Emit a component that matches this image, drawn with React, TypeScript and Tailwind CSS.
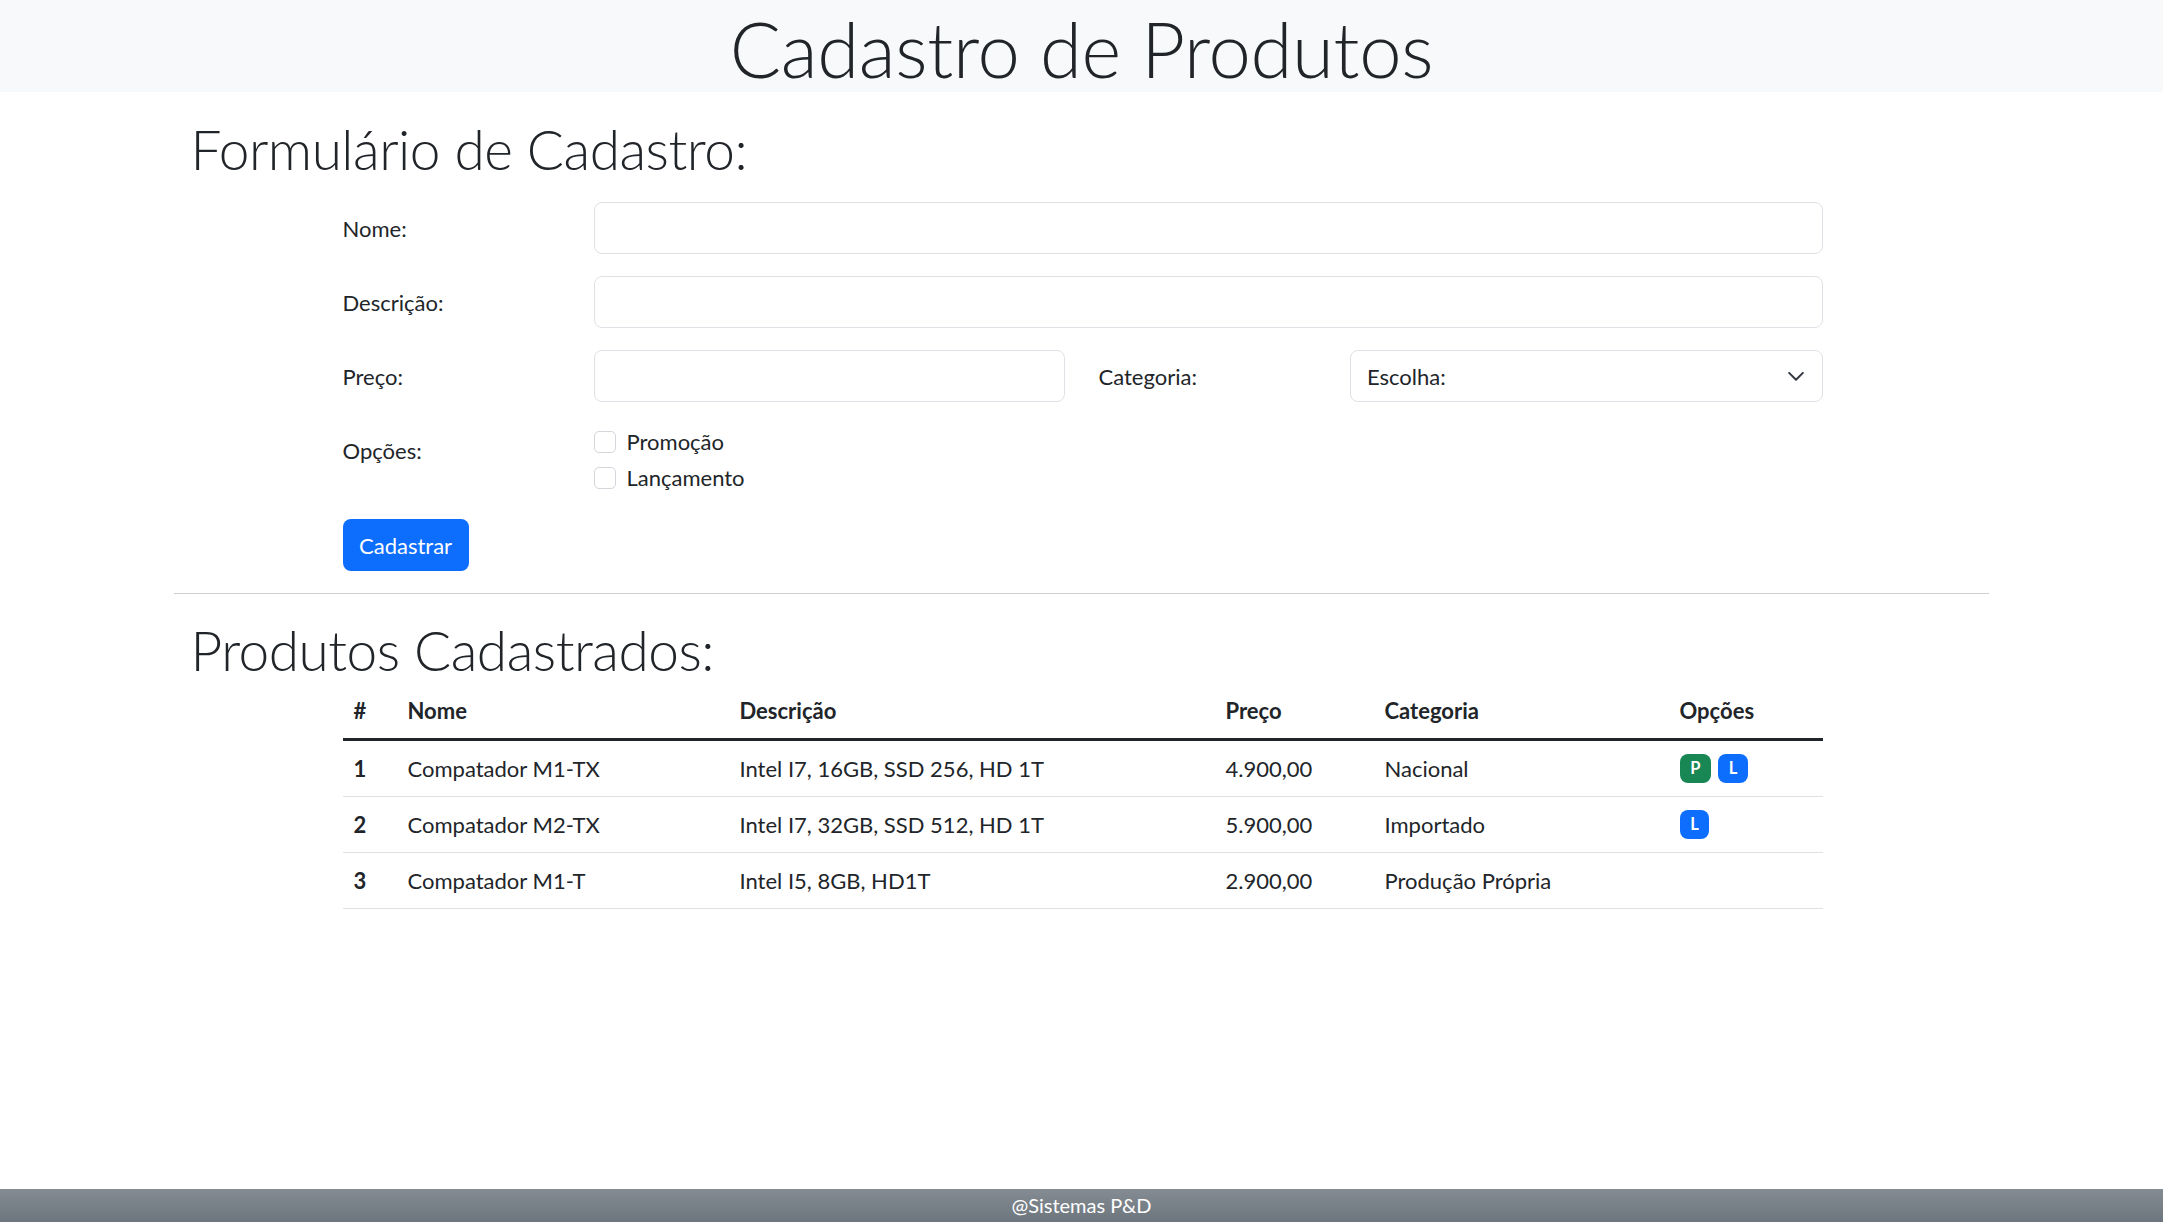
import React from 'react';

type Produto = {
  id: number;
  nome: string;
  descricao: string;
  preco: string;
  categoria: string;
  promocao: boolean;
  lancamento: boolean;
};

const produtos: Produto[] = [
  { id: 1, nome: 'Compatador M1-TX', descricao: 'Intel I7, 16GB, SSD 256, HD 1T', preco: '4.900,00', categoria: 'Nacional', promocao: true, lancamento: true },
  { id: 2, nome: 'Compatador M2-TX', descricao: 'Intel I7, 32GB, SSD 512, HD 1T', preco: '5.900,00', categoria: 'Importado', promocao: false, lancamento: true },
  { id: 3, nome: 'Compatador M1-T', descricao: 'Intel I5, 8GB, HD1T', preco: '2.900,00', categoria: 'Produção Própria', promocao: false, lancamento: false },
];

const inputCls =
  'block w-full h-[52px] px-[16.5px] rounded-[8px] border border-[#dee2e6] bg-white text-[22px] text-[#212529] outline-none';

function Checkbox({ label }: { label: string }) {
  return (
    <label className="flex items-center h-[33px] mb-[3px]">
      <input
        type="checkbox"
        className="appearance-none w-[22px] h-[22px] rounded-[5px] border border-[#d3d7dc] bg-white shrink-0"
      />
      <span className="ml-[11px] leading-[33px]">{label}</span>
    </label>
  );
}

function Badge({ color, children }: { color: 'green' | 'blue'; children: React.ReactNode }) {
  return (
    <span
      className={
        'inline-block rounded-[8px] px-[10.7px] py-[5.8px] text-[16.5px] font-bold leading-none text-white ' +
        (color === 'green' ? 'bg-[#198754]' : 'bg-[#0d6efd]')
      }
    >
      {children}
    </span>
  );
}

export default function App() {
  return (
    <div className="min-h-screen flex flex-col bg-white text-[#212529] text-[22px] leading-[33px] font-['Lato',sans-serif]">
      {/* Header */}
      <header className="h-[92px] bg-[#f8f9fa] pt-[5px]">
        <h1 className="text-center text-[76px] font-light leading-[87px] tracking-[-0.3px]">Cadastro de Produtos</h1>
      </header>

      <main className="mx-auto w-[1815px] px-[16.5px]">
        <h2 className="mt-[27px] mb-[23px] text-[55px] font-light leading-[60px] tracking-[-0.5px]">
          Formulário de Cadastro:
        </h2>

        {/* Form */}
        <form className="ml-[152px] w-[1480px]" onSubmit={(e) => e.preventDefault()}>
          <div className="flex items-center mb-[22px]">
            <label className="w-[251px] shrink-0">Nome:</label>
            <input type="text" className={inputCls} />
          </div>

          <div className="flex items-center mb-[22px]">
            <label className="w-[251px] shrink-0">Descrição:</label>
            <input type="text" className={inputCls} />
          </div>

          <div className="flex items-center mb-[22px]">
            <label className="w-[251px] shrink-0">Preço:</label>
            <div className="w-[471px] shrink-0">
              <input type="text" className={inputCls} />
            </div>
            <label className="w-[251px] shrink-0 ml-[34px]">Categoria:</label>
            <div className="relative flex-1">
              <select className={inputCls + ' appearance-none'} defaultValue="">
                <option value="">Escolha:</option>
                <option>Nacional</option>
                <option>Importado</option>
                <option>Produção Própria</option>
              </select>
              <svg
                className="absolute right-[17px] top-1/2 -translate-y-1/2 pointer-events-none"
                width="20"
                height="20"
                viewBox="0 0 16 16"
                fill="none"
                stroke="#343a40"
                strokeWidth="1.6"
                strokeLinecap="round"
                strokeLinejoin="round"
              >
                <path d="m2.5 5.5 5.5 5.5 5.5-5.5" />
              </svg>
            </div>
          </div>

          <div className="flex items-start mb-[22px]">
            <label className="w-[251px] shrink-0 pt-[10px]">Opções:</label>
            <div className="flex flex-col pt-[1px]">
              <Checkbox label="Promoção" />
              <Checkbox label="Lançamento" />
            </div>
          </div>

          <button
            type="submit"
            className="h-[52px] px-[16.5px] rounded-[8px] bg-[#0d6efd] text-white text-[22px] leading-[33px]"
          >
            Cadastrar
          </button>
        </form>

        <hr className="-mx-[16.5px] mt-[22px] border-0 border-t border-[#cfd0d1]" />

        <h2 className="mt-[26px] mb-[3px] text-[55px] font-light leading-[60px] tracking-[-0.5px]">
          Produtos Cadastrados:
        </h2>

        {/* Tabela */}
        <table className="ml-[152px] w-[1480px] table-fixed border-collapse text-left">
          <colgroup>
            <col className="w-[54px]" />
            <col className="w-[332px]" />
            <col className="w-[486px]" />
            <col className="w-[159px]" />
            <col className="w-[295px]" />
            <col className="w-[154px]" />
          </colgroup>
          <thead>
            <tr className="border-b-[3px] border-[#212529]">
              <th className="px-[11px] py-[11px] font-bold">#</th>
              <th className="px-[11px] py-[11px] font-bold">Nome</th>
              <th className="px-[11px] py-[11px] font-bold">Descrição</th>
              <th className="px-[11px] py-[11px] font-bold">Preço</th>
              <th className="px-[11px] py-[11px] font-bold">Categoria</th>
              <th className="px-[11px] py-[11px] font-bold">Opções</th>
            </tr>
          </thead>
          <tbody>
            {produtos.map((p) => (
              <tr key={p.id} className="border-b border-[#dee2e6]">
                <th className="px-[11px] py-[11px] font-bold">{p.id}</th>
                <td className="px-[11px] py-[11px]">{p.nome}</td>
                <td className="px-[11px] py-[11px]">{p.descricao}</td>
                <td className="px-[11px] py-[11px]">{p.preco}</td>
                <td className="px-[11px] py-[11px]">{p.categoria}</td>
                <td className="px-[11px] py-[11px]">
                  <div className="flex gap-[7px] h-[33px] items-center">
                    {p.promocao && <Badge color="green">P</Badge>}
                    {p.lancamento && <Badge color="blue">L</Badge>}
                  </div>
                </td>
              </tr>
            ))}
          </tbody>
        </table>
      </main>

      {/* Footer */}
      <footer className="mt-auto h-[33px] bg-[#6c757d] bg-gradient-to-b from-[#858c93] to-[#6c757d] text-center text-white text-[20px] leading-[33px]">
        @Sistemas P&amp;D
      </footer>
    </div>
  );
}
